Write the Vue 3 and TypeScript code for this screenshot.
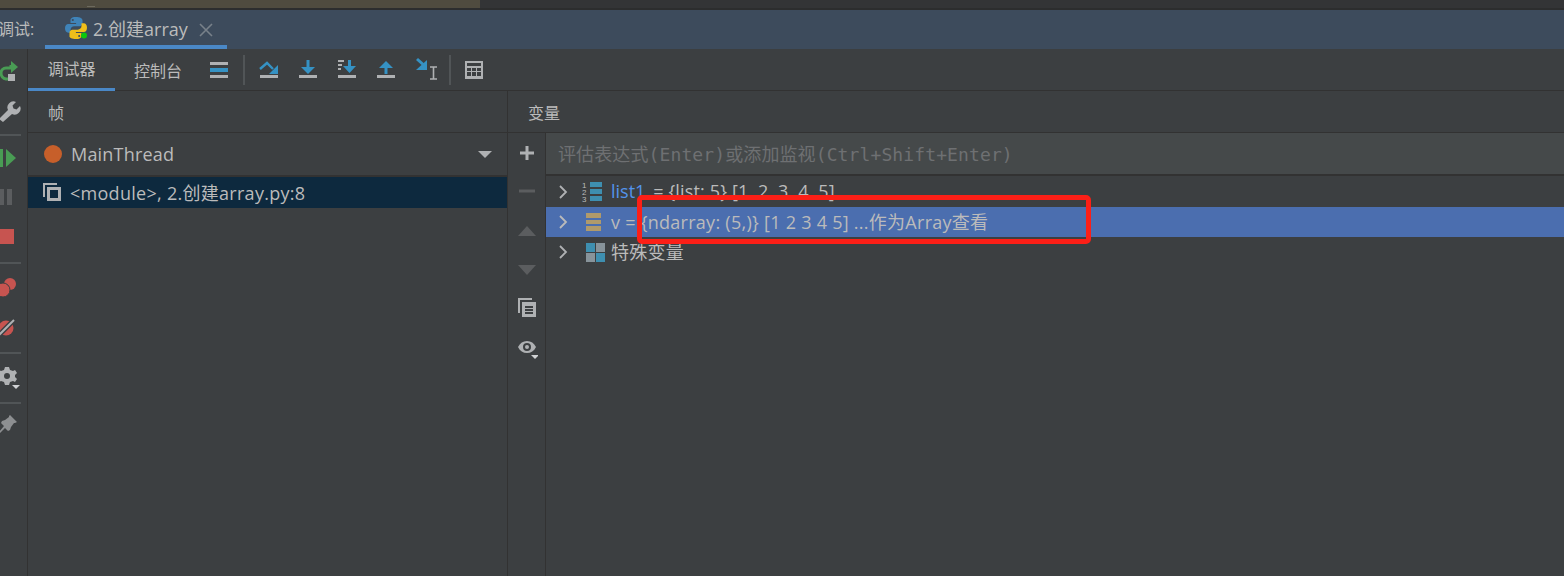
<script setup lang="ts">
const title = '2.创建array'
</script>

<template>
  <div class="ide">
    <div class="strip"><div class="strip-left"><div class="tick"></div></div></div>
    <div class="titlebar">
      <span class="debug-label">调试:</span>
      <div class="run-tab">
        <svg class="py" width="24" height="24" viewBox="0 0 24 24">
          <path fill="#3f83b8" d="M11.8 1C7 1 6.5 3 6.5 4.5V7h5.6v1H4.3C2.3 8 1 9.6 1 12.3s1.300 4.400 3.300 4.400h2.200v-2.800c0-2 1.700-3.600 3.700-3.600h5.300c1.700 0 3-1.400 3-3V4.500C18.500 2.500 16.400 1 11.800 1zM8.800 2.900a1.100 1.100 0 1 1 0 2.200 1.100 1.100 0 0 1 0-2.200z"/>
          <path fill="#f0bf1a" d="M12.200 23c4.800 0 5.300-2 5.300-3.500V17h-5.600v-1h7.800c2 0 3.300-1.600 3.300-4.300s-1.300-4.400-3.300-4.400h-2.200v2.800c0 2-1.700 3.600-3.700 3.600H8.500c-1.700 0-3 1.400-3 3v3.800C5.500 21.500 7.600 23 12.200 23zm3-1.900a1.100 1.100 0 1 1 0-2.200 1.100 1.100 0 0 1 0 2.200z"/>
          <circle cx="20" cy="19.500" r="3" fill="#0cc80c"/>
        </svg>
        <span class="tab-title">{{ title }}</span>
        <svg class="tab-close" width="14" height="14" viewBox="0 0 14 14"><path d="M1 1l12 12M13 1L1 13" stroke="#78818a" stroke-width="1.600" fill="none"/></svg>
      </div>
    </div>

    <div class="body">
      <aside class="rail">
        <div class="slot s38"><svg width="27" height="24" viewBox="0 0 27 24"><path d="M11 5v3H6a5 5 0 0 0-5 5v0a6 6 0 0 0 5 6h2" fill="none" stroke="#499c54" stroke-width="3"/><path d="M11 1l7 6-7 6z" fill="#499c54"/><rect x="8" y="14" width="7" height="7" fill="#afb1b3"/></svg></div>
        <div class="slot s38"><svg width="27" height="24" viewBox="0 0 27 24"><path d="M-1 21l9-9a6 6 0 0 1 8-8l-3.500 3.500 1 3 3 1L20 8a6 6 0 0 1-8 8l-9 8z" fill="#afb1b3"/></svg></div>
        <div class="sep"></div>
        <div class="slot s38"><svg width="27" height="24" viewBox="0 0 27 24"><rect x="0" y="3" width="3" height="18" fill="#499c54"/><path d="M6 3l10 9-10 9z" fill="#499c54"/></svg></div>
        <div class="slot s40"><svg width="27" height="24" viewBox="0 0 27 24"><rect x="-1" y="4" width="5" height="16" fill="#5b5d5f"/><rect x="7" y="4" width="5" height="16" fill="#5b5d5f"/></svg></div>
        <div class="slot s40"><svg width="27" height="24" viewBox="0 0 27 24"><rect x="-1" y="4" width="15" height="15" fill="#c75450"/></svg></div>
        <div class="sep"></div>
        <div class="slot s40"><svg width="27" height="24" viewBox="0 0 27 24"><circle cx="10" cy="9" r="6" fill="#c75450"/><circle cx="3" cy="15" r="7" fill="#c75450" stroke="#3c3f41" stroke-width="1"/></svg></div>
        <div class="slot s40"><svg width="27" height="24" viewBox="0 0 27 24"><circle cx="6" cy="13" r="7.500" fill="#c75450"/><path d="M-1 20L14 5" stroke="#3c3f41" stroke-width="5"/><path d="M-1 20L14 5" stroke="#afb1b3" stroke-width="2"/></svg></div>
        <div class="sep"></div>
        <div class="slot s40"><svg width="27" height="28" viewBox="0 0 27 28"><path d="M5 4h4l1 3 3 1 2-1 2 3-2 2v2l2 2-2 3-2-1-3 1-1 3H5l-1-3-3-1-2 1-2-3 2-2v-2l-2-2 2-3 2 1 3-1z" fill="#afb1b3"/><circle cx="7" cy="13" r="3" fill="#3c3f41"/><path d="M12 22h8l-4 4z" fill="#d0d2d4"/></svg></div>
        <div class="sep"></div>
        <div class="slot s34"><svg width="27" height="24" viewBox="0 0 27 24"><path d="M10 3l7 7-2 1-1 0-3 4-1 3-2 1-3-3-6 6v-2l5-6-3-3 1-2 3-1 4-3 0-1z" fill="#8d8f91"/></svg></div>
      </aside>

      <main class="workspace">
        <div class="toolbar">
          <div class="tb-tab active">调试器</div>
          <div class="tb-tab">控制台</div>
          <svg class="tb-icon menu" width="18" height="18" viewBox="0 0 18 18"><rect y="1" width="18" height="3" fill="#afb1b3"/><rect y="7" width="18" height="4" fill="#3592c4"/><rect y="14" width="18" height="3" fill="#afb1b3"/></svg>
          <div class="tb-sep first"></div>
          <svg class="tb-icon over" width="20" height="20" viewBox="0 0 20 20"><path d="M1 9l7-6 6 6" fill="none" stroke="#3592c4" stroke-width="2.400"/><path d="M19 5v9h-9z" fill="#3592c4"/><rect x="1" y="15" width="18" height="3" fill="#afb1b3"/></svg>
          <svg class="tb-icon into" width="20" height="20" viewBox="0 0 20 20"><rect x="8.500" y="0" width="3" height="8" fill="#3592c4"/><path d="M3 7h14l-7 7z" fill="#3592c4"/><rect x="1" y="15" width="18" height="3" fill="#afb1b3"/></svg>
          <svg class="tb-icon force" width="20" height="20" viewBox="0 0 20 20"><rect x="1" y="0" width="6" height="2" fill="#afb1b3"/><rect x="1" y="4" width="4" height="2" fill="#afb1b3"/><rect x="1" y="8" width="3" height="2" fill="#afb1b3"/><rect x="11" y="0" width="3" height="8" fill="#3592c4"/><path d="M6 6h13l-6.500 7z" fill="#3592c4"/><rect x="1" y="15" width="18" height="3" fill="#afb1b3"/></svg>
          <svg class="tb-icon out" width="20" height="20" viewBox="0 0 20 20"><path d="M3 8h14l-7-7z" fill="#3592c4"/><rect x="8.500" y="7" width="3" height="7" fill="#3592c4"/><rect x="1" y="15" width="18" height="3" fill="#afb1b3"/></svg>
          <svg class="tb-icon cursor" width="24" height="24" viewBox="0 0 24 24"><path d="M2 2l9 8" stroke="#3592c4" stroke-width="3"/><path d="M12 3v10H1z" fill="#3592c4"/><path d="M15 10h7M15 22h7M18.500 10v12" stroke="#afb1b3" stroke-width="1.600" fill="none"/></svg>
          <div class="tb-sep second"></div>
          <svg class="tb-icon calc" width="18" height="18" viewBox="0 0 18 18"><path fill-rule="evenodd" fill="#afb1b3" d="M0 0h18v18H0zM2 2v3h14V2zM2 7v3h4V7zm5 0v3h4V7zm5 0v3h4V7zM2 11v4h4v-4zm5 0v4h4v-4zm5 0v4h4v-4z"/></svg>
        </div>

        <div class="panels">
          <section class="frames">
            <div class="panel-head">帧</div>
            <div class="thread">
              <span class="dot"></span>
              <span class="thread-name">MainThread</span>
              <span class="caret"></span>
            </div>
            <div class="frame-row">
              <svg width="20" height="20" viewBox="0 0 20 20"><path d="M1 1h14v2H3v12H1z" fill="#afb1b3"/><path fill-rule="evenodd" d="M5 5h14v14H5zM8 8v8h8V8z" fill="#afb1b3"/></svg>
              <span class="frame-text">&lt;module&gt;, 2.创建array.py:8</span>
            </div>
          </section>

          <section class="vars">
            <div class="panel-head vars-head">变量</div>
            <div class="vars-body">
              <div class="side-tools">
                <svg class="st plus" width="16" height="16" viewBox="0 0 16 16"><path d="M6.500 1h3v5.500H15v3H9.500V15h-3V9.500H1v-3h5.500z" fill="#afb1b3"/></svg>
                <svg class="st minus" width="16" height="16" viewBox="0 0 16 16"><rect x="0" y="6.500" width="16" height="3" fill="#5b5d5f"/></svg>
                <svg class="st up" width="18" height="12" viewBox="0 0 18 12"><path d="M0 11L9 1l9 10z" fill="#5b5d5f"/></svg>
                <svg class="st down" width="18" height="12" viewBox="0 0 18 12"><path d="M0 1l9 10 9-10z" fill="#5b5d5f"/></svg>
                <svg class="st copy" width="18" height="20" viewBox="0 0 18 20"><path d="M0 0h14v2H2v13H0z" fill="#afb1b3"/><path fill-rule="evenodd" d="M4 4h14v15H4zM7 8v2h8V8zm0 3v2h8v-2zm0 3v2h8v-2z" fill="#afb1b3"/></svg>
                <svg class="st eye" width="20" height="22" viewBox="0 0 20 22"><path fill-rule="evenodd" d="M0 6c2-4 5-6 9-6s7 2 9 6c-2 4-5 6-9 6S2 10 0 6zm9-4a4 4 0 1 0 0 8 4 4 0 0 0 0-8z" fill="#afb1b3"/><circle cx="9" cy="6" r="2" fill="#afb1b3"/><path d="M13 14h8l-4 4z" fill="#d0d2d4"/></svg>
              </div>
              <div class="tree">
                <div class="watch">评估表达式(Enter)或添加监视(Ctrl+Shift+Enter)</div>
                <div class="row first-row">
                  <svg class="chev" width="10" height="14" viewBox="0 0 10 14"><path d="M2 1l6 6-6 6" fill="none" stroke="#afb1b3" stroke-width="1.800"/></svg>
                  <svg class="ico" width="24" height="22" viewBox="0 0 24 22"><text x="1" y="7" class="num">1</text><text x="1" y="14" class="num">2</text><text x="1" y="21" class="num">3</text><rect x="9" y="1" width="12" height="5" fill="#3e8fb0"/><rect x="9" y="8" width="12" height="5" fill="#3e8fb0"/><rect x="9" y="15" width="12" height="5" fill="#3e8fb0"/></svg>
                  <span class="name">list1</span><span class="list-val"> = {list: 5} [1, 2, 3, 4, 5]</span>
                </div>
                <div class="row selected">
                  <svg class="chev" width="10" height="14" viewBox="0 0 10 14"><path d="M2 1l6 6-6 6" fill="none" stroke="#bbbbbb" stroke-width="1.800"/></svg>
                  <svg class="ico" width="24" height="22" viewBox="0 0 24 22"><rect x="5" y="2" width="15" height="5" fill="#b09a6b"/><rect x="5" y="9" width="15" height="4" fill="#b09a6b"/><rect x="5" y="15" width="15" height="5" fill="#b09a6b"/></svg>
                  <span class="val">v = {ndarray: (5,)} [1 2 3 4 5] ...作为Array查看</span>
                </div>
                <div class="row">
                  <svg class="chev" width="10" height="14" viewBox="0 0 10 14"><path d="M2 1l6 6-6 6" fill="none" stroke="#afb1b3" stroke-width="1.800"/></svg>
                  <svg class="ico" width="24" height="22" viewBox="0 0 24 22"><rect x="5" y="2" width="9" height="9" fill="#3e8fb0"/><rect x="15" y="2" width="9" height="9" fill="#87939a"/><rect x="5" y="12" width="9" height="9" fill="#87939a"/><rect x="15" y="12" width="9" height="9" fill="#3e8fb0"/></svg>
                  <span class="val">特殊变量</span>
                </div>
              </div>
            </div>
          </section>
        </div>
      </main>
    </div>
    <div class="highlight"></div>
  </div>
</template>

<style>
html, body { margin: 0; background: #3c3f41; }
</style>

<style scoped>
.ide {
  position: relative;
  width: 1564px;
  height: 576px;
  overflow: hidden;
  display: flex;
  flex-direction: column;
  background: #3c3f41;
  color: #bbbbbb;
  font-family: "Open Sans", "Noto Sans CJK SC", sans-serif;
  font-size: 18px;
}
.strip { height: 8px; background: #333436; border-bottom: 2px solid #2c2d2e; flex: none; }
.strip-left { width: 480px; height: 8px; background: #4f4b3f; display: flex; align-items: flex-end; }
.tick { width: 8px; height: 1px; margin: 0 0 1px 87px; background: #6d6a5e; }
.titlebar { height: 39px; background: #3d4b5c; display: flex; align-items: stretch; flex: none; }
.debug-label { margin-left: -2px; width: 47px; line-height: 39px; font-size: 16px; white-space: nowrap; }
.run-tab { width: 182px; box-sizing: border-box; border-bottom: 4px solid #4a88c7; display: flex; align-items: center; padding-left: 19px; }
.tab-title { margin-left: 5px; }
.tab-close { margin-left: 11px; margin-top: 4px; }
.body { flex: 1; display: flex; min-height: 0; }
.rail { width: 27px; flex: none; border-right: 1px solid #323232; padding-top: 4px; overflow: hidden; }
.slot { display: flex; align-items: center; }
.s34 { height: 34px; }
.s38 { height: 38px; }
.s40 { height: 40px; }
.sep { width: 21px; height: 2px; background: #515557; margin: 5px 0 3px; }
.workspace { flex: 1; display: flex; flex-direction: column; min-width: 0; }
.toolbar { height: 42px; flex: none; display: flex; align-items: center; border-bottom: 1px solid #323232; box-sizing: border-box; position: relative; }
.tb-tab { width: 87px; height: 42px; box-sizing: border-box; display: flex; align-items: center; justify-content: center; font-size: 16px; }
.tb-tab.active { border-bottom: 3px solid #4a88c7; }
.tb-tab + .tb-tab { width: 76px; padding-left: 19px; justify-content: flex-start; }
.tb-icon { flex: none; }
.menu { margin-left: 19px; }
.tb-sep { width: 2px; height: 30px; background: #515557; flex: none; }
.tb-sep.first { margin-left: 15px; }
.over { margin-left: 14px; }
.into { margin-left: 19px; }
.force { margin-left: 19px; }
.out { margin-left: 19px; }
.cursor { margin-left: 19px; margin-top: -2px; }
.tb-sep.second { margin-left: 10px; }
.calc { margin-left: 14px; }
.panels { flex: 1; display: flex; min-height: 0; }
.frames { width: 479px; flex: none; border-right: 1px solid #323232; display: flex; flex-direction: column; }
.panel-head { height: 42px; flex: none; box-sizing: border-box; padding-left: 20px; line-height: 44px; font-size: 16px; border-bottom: 1px solid #323232; }
.thread { height: 44px; flex: none; box-sizing: border-box; border-bottom: 2px solid #323232; display: flex; align-items: center; padding-left: 16px; }
.dot { width: 18px; height: 18px; border-radius: 50%; background: #c75f2a; }
.thread-name { margin-left: 9px; font-size: 18px; letter-spacing: 0.2px; }
.caret { margin-left: auto; margin-right: 15px; width: 0; height: 0; border-left: 7px solid transparent; border-right: 7px solid transparent; border-top: 7px solid #afb1b3; }
.frame-row { height: 31px; flex: none; background: #0d293e; display: flex; align-items: center; padding-left: 14px; gap: 8px; letter-spacing: 0.28px; }
.frame-row svg { flex: none; margin-top: -2px; }
.frame-text { margin-top: -2px; }
.vars { flex: 1; display: flex; flex-direction: column; min-width: 0; }
.vars-body { flex: 1; display: flex; min-height: 0; }
.side-tools { width: 37px; flex: none; border-right: 1px solid #323232; display: flex; flex-direction: column; align-items: center; }
.st { flex: none; }
.plus { margin-top: 12px; }
.minus { margin-top: 22px; }
.up { margin-top: 26px; }
.down { margin-top: 27px; }
.copy { margin-top: 22px; }
.eye { margin-top: 23px; margin-left: 3px; }
.tree { flex: 1; min-width: 0; display: flex; flex-direction: column; }
.watch { height: 43px; flex: none; box-sizing: border-box; background: #45494a; border-bottom: 2px solid #323232; padding-left: 12px; line-height: 44px; font-family: "DejaVu Sans Mono", "Noto Sans CJK SC", monospace; font-size: 18px; letter-spacing: 0.11px; color: #6e7072; white-space: nowrap; }
.row { height: 30px; flex: none; display: flex; align-items: center; white-space: pre; }
.first-row { height: 31px; }
.chev { margin-left: 12px; flex: none; }
.ico { margin-left: 13px; margin-right: 6px; flex: none; }
.row.selected { background: #4b6eaf; }
.val { letter-spacing: 0.27px; margin-top: -2px; }
.name { color: #5394ec; margin-top: -2px; }
.num { font-size: 8px; font-family: "Liberation Sans", sans-serif; fill: #bbbbbb; }
.list-val { margin-left: 3px; letter-spacing: 0.15px; margin-top: -2px; }
.highlight { position: absolute; left: 637px; top: 195px; width: 454px; height: 49px; box-sizing: border-box; border: 5px solid #fc1f17; border-radius: 5px; }
</style>
